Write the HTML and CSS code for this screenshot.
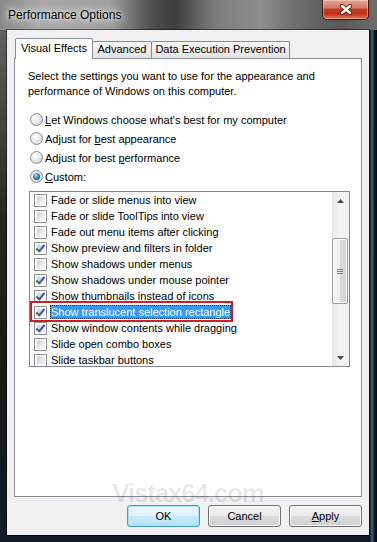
FILE: index.html
```html
<!DOCTYPE html>
<html>
<head>
<meta charset="utf-8">
<link rel="stylesheet" href="styles.css">
</head>
<body>
<div class="window">
  <div class="titlebar">
    <span class="title">Performance Options</span>
    <div class="close">
      <svg width="14" height="11" viewBox="0 0 14 11"><path d="M3 2 L11 9 M11 2 L3 9" stroke="#5a1d12" stroke-width="4.2" stroke-linecap="round"/><path d="M3 2 L11 9 M11 2 L3 9" stroke="#fff" stroke-width="2.4" stroke-linecap="round"/></svg>
    </div>
  </div>
  <div class="client">
    <div class="tabs">
      <div class="tab active">Visual Effects</div>
      <div class="tab t-adv">Advanced</div>
      <div class="tab t-dep">Data Execution Prevention</div>
    </div>
    <div class="panel">
      <p class="desc">Select the settings you want to use for the appearance and<br>performance of Windows on this computer.</p>
      <div class="radios">
        <div class="radio-row"><span class="radio"></span><span><u>L</u>et Windows choose what's best for my computer</span></div>
        <div class="radio-row"><span class="radio"></span><span>Adjust for <u>b</u>est appearance</span></div>
        <div class="radio-row"><span class="radio"></span><span>Adjust for best <u>p</u>erformance</span></div>
        <div class="radio-row"><span class="radio on"></span><span><u>C</u>ustom:</span></div>
      </div>
      <div class="listbox">
        <div class="rows">
          <div class="row"><span class="cb"></span><span class="lbl">Fade or slide menus into view</span></div>
          <div class="row"><span class="cb"></span><span class="lbl">Fade or slide ToolTips into view</span></div>
          <div class="row"><span class="cb"></span><span class="lbl">Fade out menu items after clicking</span></div>
          <div class="row"><span class="cb on"></span><span class="lbl">Show preview and filters in folder</span></div>
          <div class="row"><span class="cb"></span><span class="lbl">Show shadows under menus</span></div>
          <div class="row"><span class="cb on"></span><span class="lbl">Show shadows under mouse pointer</span></div>
          <div class="row"><span class="cb on"></span><span class="lbl">Show thumbnails instead of icons</span></div>
          <div class="row"><span class="cb on"></span><span class="lbl sel">Show translucent selection rectangle</span><span class="redbox"></span></div>
          <div class="row"><span class="cb on"></span><span class="lbl">Show window contents while dragging</span></div>
          <div class="row"><span class="cb"></span><span class="lbl">Slide open combo boxes</span></div>
          <div class="row"><span class="cb"></span><span class="lbl">Slide taskbar buttons</span></div>
        </div>
        <div class="scrollbar">
          <div class="sb-btn"><svg width="7" height="4" viewBox="0 0 7 4"><polygon points="0,4 3.5,0 7,4" fill="#4a4a4a"/></svg></div>
          <div class="sb-track"><div class="thumb"><span class="grip"></span><span class="grip"></span><span class="grip"></span></div></div>
          <div class="sb-btn"><svg width="7" height="4" viewBox="0 0 7 4"><polygon points="0,0 7,0 3.5,4" fill="#4a4a4a"/></svg></div>
        </div>
      </div>
    </div>
    <div class="buttons">
      <div class="btn default">OK</div>
      <div class="btn">Cancel</div>
      <div class="btn"><u>A</u>pply</div>
    </div>
    <div class="watermark">Vistax64.com</div>
  </div>
</div>
</body>
</html>
```

FILE: styles.css
```css
* { box-sizing: border-box; }
html, body { margin: 0; padding: 0; }
body {
  width: 377px;
  height: 542px;
  overflow: hidden;
  background: #000;
  font-family: "Liberation Sans", Arial, sans-serif;
  font-size: 11px;
  color: #000;
}
.window {
  width: 377px;
  height: 542px;
  display: flex;
  flex-direction: column;
  padding: 0 8px 7px 7px;
  background:
    linear-gradient(to right, #8a8a8a 0px, #a9a9a9 40px, #a0a0a0 110px, #505050 150px, #3e3e3e 175px, #7c7c7c 215px, #8e8e8e 260px, #6c6c6c 300px, #585858 340px, #6c6c6c 377px) 0 0 / 100% 30px no-repeat,
    linear-gradient(to right, transparent 369px, #151515 370px, #2f6f9c 372px, #0d2436 374px, #000 377px) 0 30px / 100% 512px no-repeat,
    linear-gradient(#6a6a6a 0, #4a4a4a 100px, #262626 220px, #161616 400px, #0f1c28 542px);
}
.titlebar {
  height: 30px;
  display: flex;
  justify-content: space-between;
  align-items: flex-start;
}
.title {
  margin-top: 8px;
  margin-left: 1px;
  font-size: 12px;
  line-height: 15px;
  color: #000;
  text-shadow: 0 0 10px rgba(255,255,255,0.9), 0 0 6px rgba(255,255,255,0.8), 0 0 3px rgba(255,255,255,0.6);
}
.close {
  width: 47px;
  height: 20px;
  display: flex;
  align-items: center;
  justify-content: center;
  border: 1px solid #3e1710;
  border-top: none;
  border-radius: 0 0 5px 5px;
  background: linear-gradient(#e3a696 0%, #d47a66 40%, #c53a22 50%, #c2301a 72%, #e0785a 100%);
  box-shadow: inset 0 0 0 1px rgba(255,220,210,0.45);
}
.client {
  flex: 1;
  position: relative;
  display: flex;
  flex-direction: column;
  padding: 8px 7px 8px 7px;
  background: #f0f0f0;
  box-shadow: 0 0 0 1px rgba(0,0,0,0.5);
}
.tabs {
  display: flex;
  align-items: flex-end;
  height: 21px;
  margin: 0 0 -1px 1px;
  position: relative;
  z-index: 1;
}
.tab {
  height: 17px;
  margin-bottom: 1px;
  margin-left: -1px;
  border: 1px solid #898c95;
  border-bottom: none;
  border-radius: 2px 2px 0 0;
  background: linear-gradient(#f6f6f6, #e4e4e4);
  text-align: center;
  line-height: 15px;
  white-space: nowrap;
}
.tab.active {
  width: 78px;
  height: 21px;
  margin: 0;
  padding-top: 2px;
  background: #fff;
  position: relative;
  z-index: 2;
}
.t-adv { width: 60px; }
.t-dep { width: 139px; }
.panel {
  flex: 1;
  background: #fff;
  border: 1px solid #898c95;
  padding: 10px 0 0 13px;
}
.desc {
  margin: 0;
  line-height: 15px;
}
.radios { margin-top: 11px; }
.radio-row {
  height: 19px;
  display: flex;
  align-items: center;
  gap: 2px;
  padding-left: 2px;
}
.radio {
  width: 13px;
  height: 13px;
  border-radius: 50%;
  border: 1px solid #8a8c8f;
  background: radial-gradient(circle at 35% 35%, #ffffff 0%, #e9e9e9 45%, #c9c9c9 100%);
  display: flex;
  align-items: center;
  justify-content: center;
}
.radio.on::after {
  content: "";
  width: 7px;
  height: 7px;
  border-radius: 50%;
  background: radial-gradient(circle at 40% 35%, #bfeaff 0%, #3b8fd0 40%, #184f87 75%, #0f3558 100%);
}
.listbox {
  margin-top: 5px;
  margin-left: 1px;
  width: 321px;
  height: 176px;
  border: 1px solid #828790;
  display: flex;
}
.rows {
  flex: 1;
  overflow: hidden;
}
.row {
  position: relative;
  height: 16px;
  display: flex;
  align-items: center;
  padding-left: 4px;
}
.cb {
  width: 13px;
  height: 13px;
  flex: none;
  border: 1px solid #8e8f8f;
  background: #f4f4f4;
  box-shadow: inset 0 0 0 1px #ffffff;
  position: relative;
}
.cb::before {
  content: "";
  position: absolute;
  left: 2px;
  top: 2px;
  width: 7px;
  height: 7px;
  background: linear-gradient(135deg, #c9ccd1 0%, #e4e6e8 55%, #f7f7f7 100%);
}
.cb.on::after {
  content: "";
  position: absolute;
  left: 3px;
  top: 0px;
  width: 3px;
  height: 7px;
  border: solid #3c5d98;
  border-width: 0 2px 2px 0;
  transform: rotate(40deg);
}
.lbl {
  margin-left: 3px;
  padding: 0 1px;
  line-height: 14px;
  white-space: nowrap;
}
.lbl.sel {
  background: #3399ff;
  color: #fff;
  outline: 1px dotted rgba(0,0,0,0.55);
  outline-offset: -1px;
}
.redbox {
  position: absolute;
  left: 0;
  top: -3px;
  width: 203px;
  height: 21px;
  border: 2px solid #d11e1e;
}
.scrollbar {
  width: 17px;
  display: flex;
  flex-direction: column;
  background: linear-gradient(to right, #e6e6e6, #f3f3f3 40%, #f0f0f0);
}
.sb-btn {
  height: 17px;
  display: flex;
  align-items: center;
  justify-content: center;
}
.sb-track {
  flex: 1;
  padding: 29px 1px 0 0;
}
.thumb {
  height: 66px;
  border: 1px solid #9a9a9a;
  border-radius: 2px;
  background: linear-gradient(to right, #f5f5f5 0%, #ececec 50%, #dadada 51%, #d2d2d2 100%);
  box-shadow: inset 0 0 0 1px #fbfbfb;
  display: flex;
  flex-direction: column;
  align-items: center;
  justify-content: center;
  gap: 1px;
}
.grip {
  width: 6px;
  height: 1px;
  background: #7a7a7a;
}
.buttons {
  display: flex;
  justify-content: flex-end;
  gap: 8px;
  margin-top: 8px;
}
.btn {
  width: 73px;
  height: 22px;
  border: 1px solid #707070;
  border-radius: 3px;
  background: linear-gradient(#f2f2f2 0%, #ebebeb 50%, #dddddd 50%, #cfcfcf 100%);
  box-shadow: inset 0 0 0 1px #fcfcfc;
  display: flex;
  align-items: center;
  justify-content: center;
  line-height: 14px;
}
.btn.default {
  border-color: #3c9fc8;
  background: linear-gradient(#eef8fd 0%, #dff2fc 50%, #c9ebfc 50%, #b6e1f7 100%);
  box-shadow: inset 0 0 0 1px #a9e2f8;
}
.watermark {
  position: absolute;
  left: 0;
  right: 0;
  top: 450px;
  text-align: center;
  font-size: 26px;
  line-height: 26px;
  font-weight: bold;
  letter-spacing: -1.2px;
  color: rgba(0,0,0,0.09);
  pointer-events: none;
}
```
